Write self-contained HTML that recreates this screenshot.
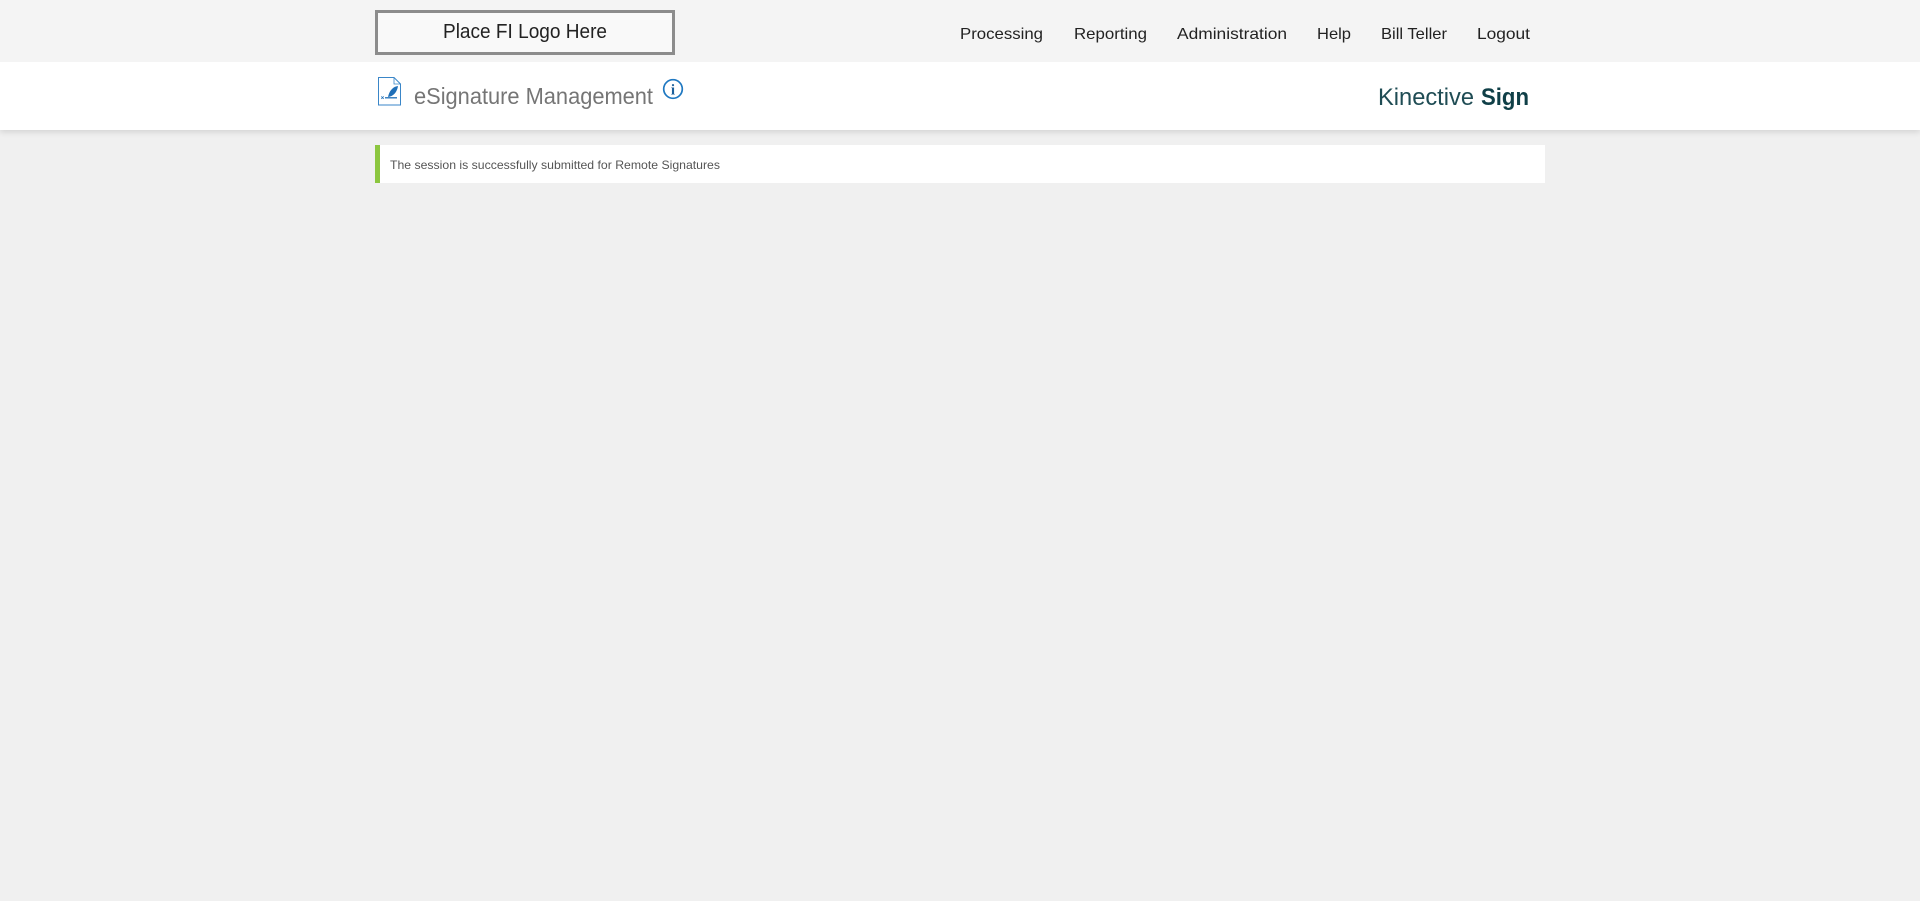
<!DOCTYPE html>
<html lang="en">
<head>
<meta charset="utf-8">
<title>eSignature Management</title>
<style>
html,body{margin:0;padding:0;width:1920px;height:901px;overflow:hidden;background:#f0f0f0}
.top{position:absolute;left:0;top:0;width:1920px;height:62px;background:#f4f4f4}
.sub{position:absolute;left:0;top:62px;width:1920px;height:68px;background:#fff;box-shadow:0 2px 6px rgba(0,0,0,.13);clip-path:inset(0 0 -20px 0)}
.logo{position:absolute;left:375px;top:10px;width:300px;height:45px;box-sizing:border-box;border:3px solid #8c8c8c;background:#f9f9f9}
.msg{position:absolute;left:375px;top:145px;width:1170px;height:38px;box-sizing:border-box;background:#fff;border-left:5px solid #8cc63f}
svg.t{position:absolute;left:0;top:0}
text{font-family:"Liberation Sans",sans-serif}
</style>
</head>
<body>
<div class="top"></div>
<div class="sub"></div>
<div class="logo"></div>
<div class="msg"></div>
<svg class="t" width="1920" height="901" viewBox="0 0 1920 901" xmlns="http://www.w3.org/2000/svg">
  <text x="443" y="38" font-size="20" fill="#222" textLength="164" lengthAdjust="spacingAndGlyphs">Place FI Logo Here</text>
  <g font-size="16" fill="#222">
    <text x="960" y="39" textLength="83" lengthAdjust="spacingAndGlyphs">Processing</text>
    <text x="1074" y="39" textLength="73" lengthAdjust="spacingAndGlyphs">Reporting</text>
    <text x="1177" y="39" textLength="110" lengthAdjust="spacingAndGlyphs">Administration</text>
    <text x="1317" y="39" textLength="34" lengthAdjust="spacingAndGlyphs">Help</text>
    <text x="1381" y="39" textLength="66" lengthAdjust="spacingAndGlyphs">Bill Teller</text>
    <text x="1477" y="39" textLength="53" lengthAdjust="spacingAndGlyphs">Logout</text>
  </g>
  <text x="414" y="104" font-size="23" fill="#757575" textLength="239" lengthAdjust="spacingAndGlyphs">eSignature Management</text>
  <text x="1378" y="105" font-size="24" fill="#1f4c54" textLength="96" lengthAdjust="spacingAndGlyphs">Kinective</text>
  <text x="1481" y="105" font-size="24" font-weight="700" fill="#0f3f47" textLength="48" lengthAdjust="spacingAndGlyphs">Sign</text>
  <text x="390" y="169" font-size="12" fill="#555" textLength="330" lengthAdjust="spacingAndGlyphs">The session is successfully submitted for Remote Signatures</text>

  <!-- document with pen icon -->
  <path d="M378.500 77.500H394L400.500 84V105H378.500Z" fill="#fff" stroke="#3a86c8" stroke-width="1"/>
  <path d="M394 77.500V84H400.500" fill="none" stroke="#3a86c8" stroke-width=".8"/>
  <path d="M398 86C393.500 86.500 390 90 388.500 95L388 97C393 96.500 397 92.500 398 86Z" fill="#1f6fb8"/>
  <path d="M385 97.800H397" stroke="#1f6fb8" stroke-width="1.300"/>
  <path d="M381.300 96.400L383.700 98.800M383.700 96.400L381.300 98.800" stroke="#1f6fb8" stroke-width=".8" fill="none"/>

  <!-- info icon -->
  <circle cx="673" cy="89" r="9.300" fill="none" stroke="#1f78c1" stroke-width="1.700"/>
  <text x="673" y="94.500" font-size="15" font-weight="700" text-anchor="middle" fill="#1c5f9a" style="font-family:'Liberation Serif',serif">i</text>
</svg>
</body>
</html>
